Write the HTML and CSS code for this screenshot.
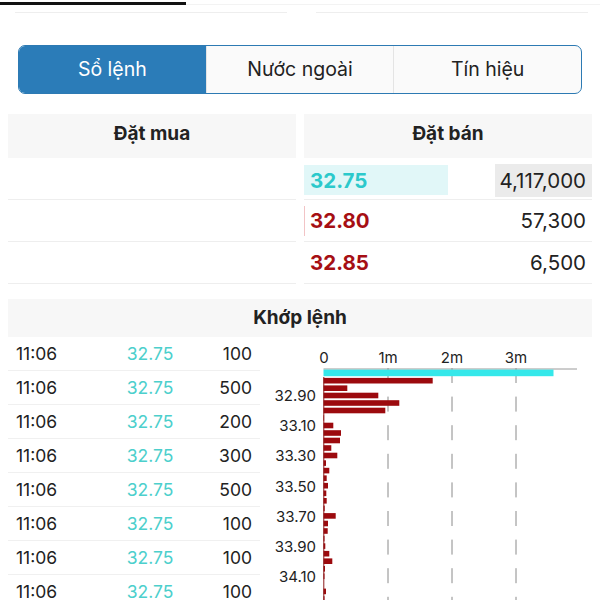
FILE: index.html
```html
<!DOCTYPE html>
<html lang="vi">
<head>
<meta charset="utf-8">
<title>Sổ lệnh</title>
<link rel="stylesheet" href="styles.css">
</head>
<body>
<div class="top">
  <div class="tabline"><span class="tab-active"></span><span class="tab-rest"></span></div>
  <div class="sublines"><span></span><span></span></div>
</div>

<div class="seg">
  <div class="seg-item active">Sổ lệnh</div>
  <div class="seg-item">Nước ngoài</div>
  <div class="seg-item">Tín hiệu</div>
</div>

<div class="book">
  <div class="panel">
    <div class="panel-head">Đặt mua</div>
    <div class="book-row first"></div>
    <div class="book-row"></div>
    <div class="book-row"></div>
  </div>
  <div class="panel">
    <div class="panel-head">Đặt bán</div>
    <div class="book-row first">
      <span class="bprice up hl-price">32.75</span>
      <span class="bqty hl-qty">4,117,000</span>
    </div>
    <div class="book-row">
      <span class="bprice down tick">32.80</span>
      <span class="bqty">57,300</span>
    </div>
    <div class="book-row">
      <span class="bprice down">32.85</span>
      <span class="bqty">6,500</span>
    </div>
  </div>
</div>

<div class="match-head">Khớp lệnh</div>
<div class="match-body">
  <div class="trades">
    <div class="trade"><span class="t">11:06</span><span class="p">32.75</span><span class="q">100</span></div>
    <div class="trade"><span class="t">11:06</span><span class="p">32.75</span><span class="q">500</span></div>
    <div class="trade"><span class="t">11:06</span><span class="p">32.75</span><span class="q">200</span></div>
    <div class="trade"><span class="t">11:06</span><span class="p">32.75</span><span class="q">300</span></div>
    <div class="trade"><span class="t">11:06</span><span class="p">32.75</span><span class="q">500</span></div>
    <div class="trade"><span class="t">11:06</span><span class="p">32.75</span><span class="q">100</span></div>
    <div class="trade"><span class="t">11:06</span><span class="p">32.75</span><span class="q">100</span></div>
    <div class="trade"><span class="t">11:06</span><span class="p">32.75</span><span class="q">100</span></div>
  </div>
  <svg class="chart" width="340" height="264" viewBox="260 336 340 264">
    <g class="ticks">
      <text x="324" y="362">0</text>
      <text x="388" y="362">1m</text>
      <text x="452" y="362">2m</text>
      <text x="516" y="362">3m</text>
    </g>
    <g class="grid">
      <line x1="388" y1="367" x2="388" y2="600"/>
      <line x1="452" y1="367" x2="452" y2="600"/>
      <line x1="516" y1="367" x2="516" y2="600"/>
    </g>
    <line class="axis" x1="323.5" y1="368" x2="577" y2="368"/>
    <rect class="buy" x="323.5" y="368.6" width="230" height="6.6"/>
    <g class="sell">
      <rect x="323.5" y="376.9" width="109.2" height="5.6"/>
      <rect x="323.5" y="384.4" width="23.8" height="5.6"/>
      <rect x="323.5" y="391.7" width="54.8" height="5.6"/>
      <rect x="323.5" y="399.2" width="75.8" height="5.6"/>
      <rect x="323.5" y="406.7" width="61.8" height="5.6"/>
      <rect x="323.5" y="414.2" width="0.6" height="5.6"/>
      <rect x="323.5" y="421.7" width="9.8" height="5.6"/>
      <rect x="323.5" y="429.2" width="17.5" height="5.6"/>
      <rect x="323.5" y="436.7" width="16.5" height="5.6"/>
      <rect x="323.5" y="444.2" width="7.8" height="5.6"/>
      <rect x="323.5" y="451.7" width="13.8" height="5.6"/>
      <rect x="323.5" y="459.3" width="2.5" height="5.6"/>
      <rect x="323.5" y="466.8" width="5.8" height="5.6"/>
      <rect x="323.5" y="474.4" width="3.2" height="5.6"/>
      <rect x="323.5" y="481.9" width="4.5" height="5.6"/>
      <rect x="323.5" y="489.5" width="2.8" height="5.6"/>
      <rect x="323.5" y="497.0" width="3.2" height="5.6"/>
      <rect x="323.5" y="504.6" width="1.2" height="5.6"/>
      <rect x="323.5" y="512.1" width="12.2" height="5.6"/>
      <rect x="323.5" y="519.7" width="4.5" height="5.6"/>
      <rect x="323.5" y="527.2" width="4.2" height="5.6"/>
      <rect x="323.5" y="534.8" width="1" height="5.6"/>
      <rect x="323.5" y="542.3" width="1.8" height="5.6"/>
      <rect x="323.5" y="549.9" width="5.8" height="5.6"/>
      <rect x="323.5" y="557.4" width="8.8" height="5.6"/>
      <rect x="323.5" y="565.0" width="1.5" height="5.6"/>
      <rect x="323.5" y="572.5" width="1" height="5.6"/>
      <rect x="323.5" y="587.6" width="2.5" height="5.6"/>
      <rect x="323.5" y="595.2" width="1" height="5.6"/>
    </g>
    <line class="vaxis" x1="323.8" y1="376" x2="323.8" y2="600"/>
    <g class="prices">
      <text x="316" y="400">32.90</text>
      <text x="316" y="430">33.10</text>
      <text x="316" y="460">33.30</text>
      <text x="316" y="490.5">33.50</text>
      <text x="316" y="520.7">33.70</text>
      <text x="316" y="550.8">33.90</text>
      <text x="316" y="581">34.10</text>
    </g>
  </svg>
</div>
</body>
</html>
```

FILE: styles.css
```css
* {
  box-sizing: border-box;
}

html, body {
  margin: 0;
  padding: 0;
  background: #ffffff;
}

body {
  width: 600px;
  height: 600px;
  overflow: hidden;
  font-family: Inter, "Noto Sans", "Liberation Sans", sans-serif;
  color: #222222;
}

.top {
  height: 45px;
}

.tabline {
  display: flex;
  padding-top: 2px;
  height: 6px;
}

.tab-active {
  width: 186px;
  height: 3px;
  background: #111111;
}

.tab-rest {
  flex: 1;
  height: 3px;
  border-bottom: 1px solid #f3f3f3;
}

.sublines {
  display: flex;
  gap: 29px;
  margin: 6px 12px 0 15px;
}

.sublines span {
  flex: 1;
  height: 1px;
  background: #eeeeee;
}

.seg {
  display: flex;
  margin: 0 18px;
  height: 49px;
  border: 1px solid #2d7ab3;
  border-radius: 7px;
  overflow: hidden;
  background: #fafafa;
}

.seg-item {
  flex: 1;
  display: flex;
  align-items: center;
  justify-content: center;
  padding-bottom: 1px;
  font-size: 19.5px;
  color: #222222;
  border-left: 1px solid #e4e4e4;
}

.seg-item:first-child {
  border-left: none;
}

.seg-item.active {
  background: #2b7cb8;
  color: #ffffff;
}

.book {
  display: grid;
  grid-template-columns: 288px 288px;
  gap: 8px;
  margin: 20px 8px 0 8px;
}

.panel-head {
  height: 44px;
  padding-bottom: 5px;
  background: #f7f7f7;
  display: flex;
  align-items: center;
  justify-content: center;
  font-weight: 700;
  font-size: 19px;
  color: #222222;
}

.book-row {
  display: flex;
  align-items: center;
  height: 42px;
  border-bottom: 1px solid #eeeeee;
  font-size: 20.5px;
}

.book-row.first {
  padding-top: 3px;
}

.bprice {
  width: 144px;
  height: 30px;
  display: flex;
  align-items: center;
  padding-left: 6px;
  font-weight: 700;
}

.bqty {
  margin-left: auto;
  height: 33px;
  display: flex;
  align-items: center;
  justify-content: flex-end;
  padding-right: 6px;
  color: #222222;
}

.up {
  color: #2cc9cb;
}

.down {
  color: #a60f14;
}

.hl-price {
  background: #e1f7f8;
}

.hl-qty {
  width: 97px;
  background: #ebebeb;
}

.tick {
  box-shadow: inset 1px 0 0 #f2c4c6;
}

.match-head {
  margin: 15px 8px 0 8px;
  height: 38px;
  padding-bottom: 1px;
  background: #f7f7f7;
  display: flex;
  align-items: center;
  justify-content: center;
  font-weight: 700;
  font-size: 19px;
  color: #222222;
}

.match-body {
  display: flex;
  margin-left: 8px;
}

.trades {
  width: 252px;
  flex: none;
}

.trade {
  display: flex;
  align-items: center;
  height: 34px;
  padding: 0 8px 1px 8px;
  border-bottom: 1px solid #f0f0f0;
  font-size: 17.5px;
}

.trade .t {
  width: 99px;
  color: #222222;
}

.trade .p {
  width: 70px;
  text-align: center;
  color: #4ccfcc;
}

.trade .q {
  width: 67px;
  text-align: right;
  color: #222222;
}

.chart {
  display: block;
  flex: none;
}

.chart text {
  font-family: Inter, "Noto Sans", "Liberation Sans", sans-serif;
  font-size: 15px;
  fill: #222222;
}

.ticks text {
  text-anchor: middle;
}

.prices text {
  text-anchor: end;
}

.grid line {
  stroke: #8a8a8a;
  stroke-width: 1;
  stroke-dasharray: 15 13.6;
}

.axis {
  stroke: #9a9a9a;
  stroke-width: 1;
}

.vaxis {
  stroke: #8a1a1a;
  stroke-width: 1;
}

.buy {
  fill: #35e8ea;
}

.sell rect {
  fill: #9c0a0e;
}
```
